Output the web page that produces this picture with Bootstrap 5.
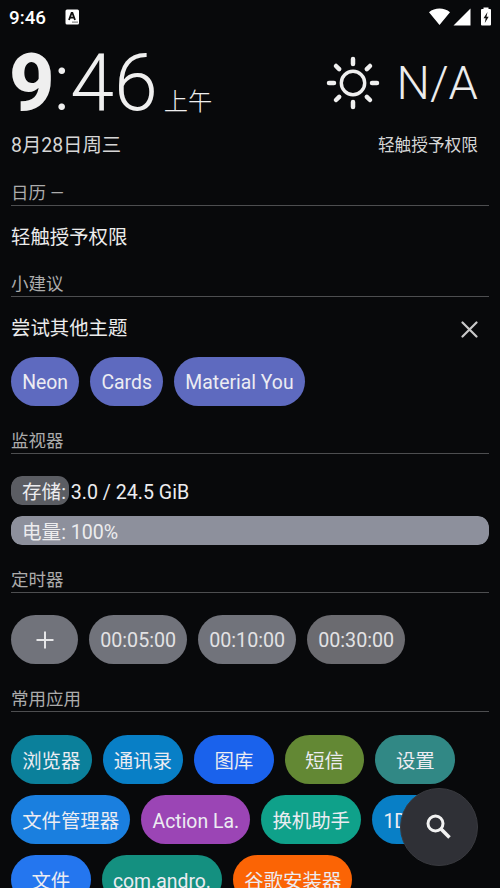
<!DOCTYPE html>
<html lang="zh-CN">
<head>
<meta charset="utf-8">
<meta name="viewport" content="width=device-width, initial-scale=1">
<title>Launcher</title>
<link href="https://cdn.jsdelivr.net/npm/bootstrap@5.3.0/dist/css/bootstrap.min.css" rel="stylesheet">
<style>
html, body { height: 888px; overflow: hidden; }
body { background: #08090b; color: #ececec; font-family: Roboto, "Noto Sans CJK SC", sans-serif; font-size: 19.4px; line-height: 28px; }
.screen { height: 888px; padding: 0 11px; white-space: nowrap; }
.statusbar { height: 34px; flex: none; margin: 0 -3px 0 -2px; font-size: 18.8px; font-weight: 500; color: #fff; }
.sb-time { margin-top: 1px; }
.sb-icons { margin-top: -1px; }
.clock-row { height: 96px; flex: none; padding-top: 1px; }
.clock { font-size: 79px; line-height: 96px; font-weight: 300; color: #efefef; margin-left: -2px; }
.clock-hour { font-weight: 800; letter-spacing: -1px; }
.ampm { font-size: 24.3px; font-weight: 300; margin-left: 6px; }
.weather { font-size: 47px; height: 96px; line-height: 96px; font-weight: 300; margin-right: 11px; }
.date-row { height: 30px; flex: none; margin-top: 1px; padding-right: 11px; color: #d6d6d6; }
.tap-note { font-size: 16.7px; }
.section-title { height: 26px; flex: none; font-size: 17.5px; line-height: 26px; color: #acacac; border-bottom: 1px solid #4d4e50; }
.entry { height: 30px; flex: none; line-height: 30px; }
.chip { --bs-btn-color: #ececf2; --bs-btn-border-width: 0; --bs-btn-padding-x: 11.2px; --bs-btn-padding-y: 0; --bs-btn-font-size: 19.4px; height: 49px; line-height: 52px; flex: none; background: var(--chip); }
.chips { gap: 11px; flex: none; }
.theme { --chip: #5e6abf; }
.timer { --chip: #71737b; --bs-btn-color: #e2e2e4; --bs-btn-font-size: 19.7px; width: 98px; }
.timer.add { width: 67px; }
.t-gray { --chip: #6b6b70; }
.short { width: 79.7px; }
.app { line-height: 53px; }
.meter { height: 29px; flex: none; border-radius: 11px; position: relative; background: transparent; font-size: 19.6px; overflow: hidden; }
.meter .progress-bar { border-radius: 11px; background: #5b5d63; }
.meter.full .progress-bar { background: #8d909c; }
.meter-label { position: absolute; left: 11px; top: 2px; line-height: 29px; color: #ececee; }
.sec-cal { margin-top: 19px; }
.entry-cal { margin-top: 17px; }
.sec-tip { margin-top: 18px; }
.entry-tip { margin-top: 17px; padding-right: 11px; }
.row-theme { margin-top: 13px; }
.sec-mon { margin-top: 22px; }
.meter-one { margin-top: 22px; margin-bottom: 11px; }
.sec-timer { margin-top: 22px; }
.row-timer { margin-top: 22px; }
.sec-apps { margin-top: 22px; }
.row-apps { margin-top: 22.500px; }
.row-more { margin-top: 11.200px; }
.a1 { --chip: #0b809b; } .a2 { --chip: #087fc6; } .a3 { --chip: #1a62ec; }
.a4 { --chip: #638834; } .a5 { --chip: #318885; } .a6 { --chip: #1a7fdf; }
.a7 { --chip: #9b45b5; } .a8 { --chip: #0fa18a; } .a9 { --chip: #2476ef; }
.a10 { --chip: #149080; } .a11 { --chip: #fb6405; }
.fab { position: absolute; left: 400px; top: 788px; width: 78px; height: 78px; background: #2f3036; border: 1px solid #393a3f; }
</style>
<script src="https://cdn.jsdelivr.net/npm/bootstrap@5.3.0/dist/js/bootstrap.bundle.min.js"></script>
</head>
<body>
<main class="screen d-flex flex-column">
  <header class="statusbar d-flex align-items-center justify-content-between">
    <div class="d-flex align-items-center">
      <span class="sb-time">9:46</span>
      <svg class="ms-3 sb-icons" width="18" height="16" viewBox="0 0 18 16"><rect x="3.500" y=".5" width="13.500" height="15" rx="1.500" fill="#fff"/><path d="M7 11 9.600 4h.8l2.600 7M8 8.700h4" fill="none" stroke="#111" stroke-width="1.800"/><path d="M10.500 13.200h5" stroke="#111" stroke-width="1.200" stroke-dasharray="1 1"/></svg>
    </div>
    <svg class="sb-icons" width="63" height="20" viewBox="0 0 63 20" fill="#fff"><path d="M0 5.200C5.700.2 15.300.2 21 5.200L10.500 18ZM41.500 1.500v17H24.500ZM54.500 .5h5v1.500h1.500q1 0 1 1v14.500q0 1-1 1h-8q-1 0-1-1V3q0-1 1-1h1.500Z"/><path d="M58.500 5 54.500 11.200H56.700L55.800 16 59.700 9.700H57.500Z" fill="#111"/></svg>
  </header>
  <section class="clock-row d-flex justify-content-between">
    <div class="clock"><span class="clock-hour">9</span>:46<span class="ampm">上午</span></div>
    <div class="weather d-flex align-items-center">
      <svg class="sun" width="56" height="56" viewBox="-28 -28 56 56" fill="none" stroke="#efefef" stroke-linecap="round"><circle r="11.700" stroke-width="3.400"/><path stroke-width="4.500" d="M0-24v5M0 24v-5M-24 0h5M24 0h-5M-17-17l3.200 3.200M17-17l-3.200 3.200M-17 17l3.200-3.200M17 17l-3.200-3.200"/></svg>
      <span class="ms-3">N/A</span>
    </div>
  </section>
  <div class="date-row d-flex justify-content-between align-items-center"><span>8月28日周三</span><span class="tap-note">轻触授予权限</span></div>

  <h2 class="section-title fw-normal mb-0 sec-cal">日历 —</h2>
  <div class="entry entry-cal">轻触授予权限</div>

  <h2 class="section-title fw-normal mb-0 sec-tip">小建议</h2>
  <div class="entry entry-tip d-flex justify-content-between align-items-center"><span>尝试其他主题</span>
    <svg width="17" height="17" viewBox="0 0 17 17" stroke="#c9c9c9" stroke-width="2.200" stroke-linecap="round"><path d="M1.500 1.500l14 14M15.500 1.500l-14 14"/></svg></div>
  <div class="chips d-flex row-theme">
    <button class="btn rounded-pill chip theme">Neon</button>
    <button class="btn rounded-pill chip theme">Cards</button>
    <button class="btn rounded-pill chip theme">Material You</button>
  </div>

  <h2 class="section-title fw-normal mb-0 sec-mon">监视器</h2>
  <div class="progress meter meter-one"><div class="progress-bar" style="width:12.1%"></div><span class="meter-label">存储: 3.0 / 24.5 GiB</span></div>
  <div class="progress meter full"><div class="progress-bar" style="width:100%"></div><span class="meter-label">电量: 100%</span></div>

  <h2 class="section-title fw-normal mb-0 sec-timer">定时器</h2>
  <div class="chips d-flex row-timer">
    <button class="btn rounded-pill chip timer add" aria-label="+"><svg class="d-block mx-auto" width="18" height="18" viewBox="0 0 18 18" stroke="#e6e6e8" stroke-width="2"><path d="M9 .5v17M.5 9h17"/></svg></button>
    <button class="btn rounded-pill chip timer">00:05:00</button>
    <button class="btn rounded-pill chip timer">00:10:00</button>
    <button class="btn rounded-pill chip timer t-gray">00:30:00</button>
  </div>

  <h2 class="section-title fw-normal mb-0 sec-apps">常用应用</h2>
  <div class="chips d-flex row-apps">
    <button class="btn rounded-pill chip app a1">浏览器</button>
    <button class="btn rounded-pill chip app a2">通讯录</button>
    <button class="btn rounded-pill chip app short a3">图库</button>
    <button class="btn rounded-pill chip app short a4">短信</button>
    <button class="btn rounded-pill chip app short a5">设置</button>
  </div>
  <div class="chips d-flex row-more">
    <button class="btn rounded-pill chip app a6">文件管理器</button>
    <button class="btn rounded-pill chip app a7">Action La.</button>
    <button class="btn rounded-pill chip app a8">换机助手</button>
    <button class="btn rounded-pill chip app a2">1DM+</button>
  </div>
  <div class="chips d-flex row-more">
    <button class="btn rounded-pill chip app short a9">文件</button>
    <button class="btn rounded-pill chip app a10">com.andro.</button>
    <button class="btn rounded-pill chip app a11">谷歌安装器</button>
  </div>
</main>
<button class="btn rounded-circle fab p-0" aria-label="search"><svg class="d-block mx-auto" width="26" height="26" viewBox="0 0 26 26" fill="none" stroke="#f2f2f2"><circle cx="9.500" cy="9.500" r="7.500" stroke-width="3"/><path d="M14.800 14.800 23.500 23.500" stroke-width="3.600"/></svg></button>
</body>
</html>
